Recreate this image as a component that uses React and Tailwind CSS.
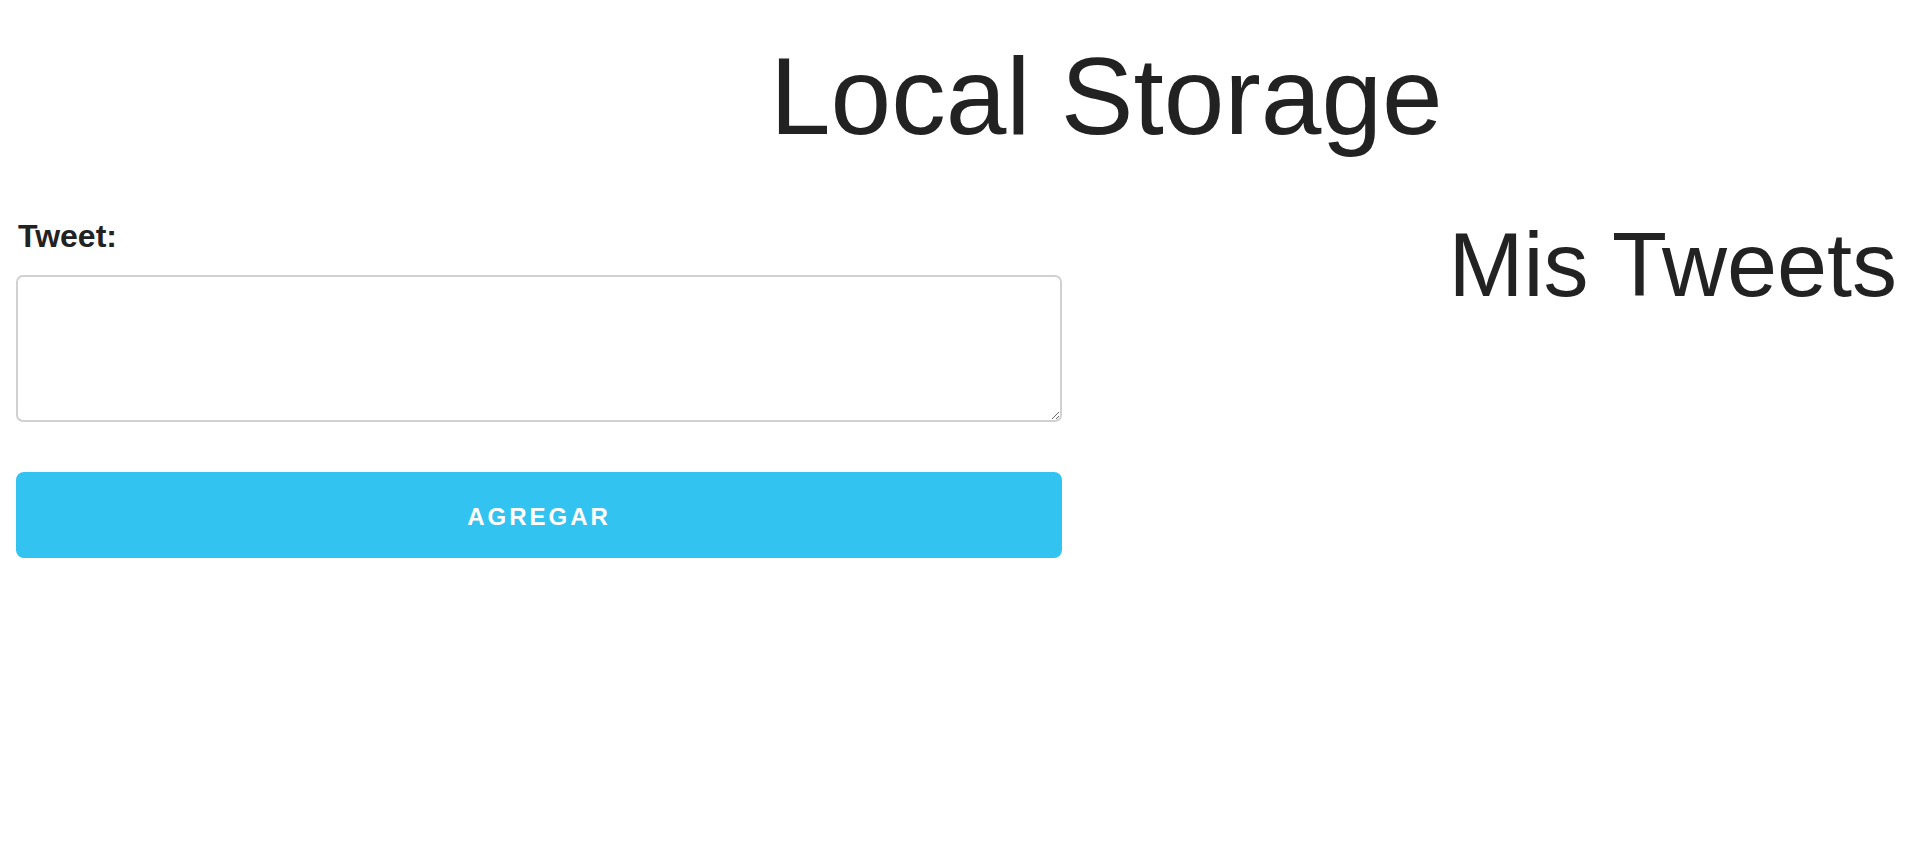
import React from 'react';

const App = () => {
    return (
        <div className="min-h-screen bg-white text-[#222222]">
            <h1 className="pt-[42px] pl-[770px] text-[109px] leading-none font-normal font-['Liberation_Sans',Arial,sans-serif]">
                Local Storage
            </h1>

            <div className="flex mt-[69px]">
                {/* form column */}
                <div className="w-[1046px] ml-[16px] flex flex-col">
                    <label className="pl-[2px] text-[32px] leading-none font-bold font-['Liberation_Sans',Arial,sans-serif]">
                        Tweet:
                    </label>
                    <textarea className="mt-[23px] h-[147px] w-full border-2 border-[#d1d1d1] rounded-[7px] bg-white px-3 py-2 text-[24px] outline-none" />
                    <button className="mt-[50px] h-[86px] w-full pt-[4px] rounded-[8px] bg-[#33c3f0] text-white text-[24px] font-bold tracking-[3px] uppercase font-['Liberation_Sans',Arial,sans-serif]">
                        Agregar
                    </button>
                </div>

                {/* tweets column */}
                <div className="flex-1 pr-[23px] text-right">
                    <h2 className="text-[90px] leading-none font-normal font-['Liberation_Sans',Arial,sans-serif]">
                        Mis Tweets
                    </h2>
                </div>
            </div>
        </div>
    );
};

export default App;
